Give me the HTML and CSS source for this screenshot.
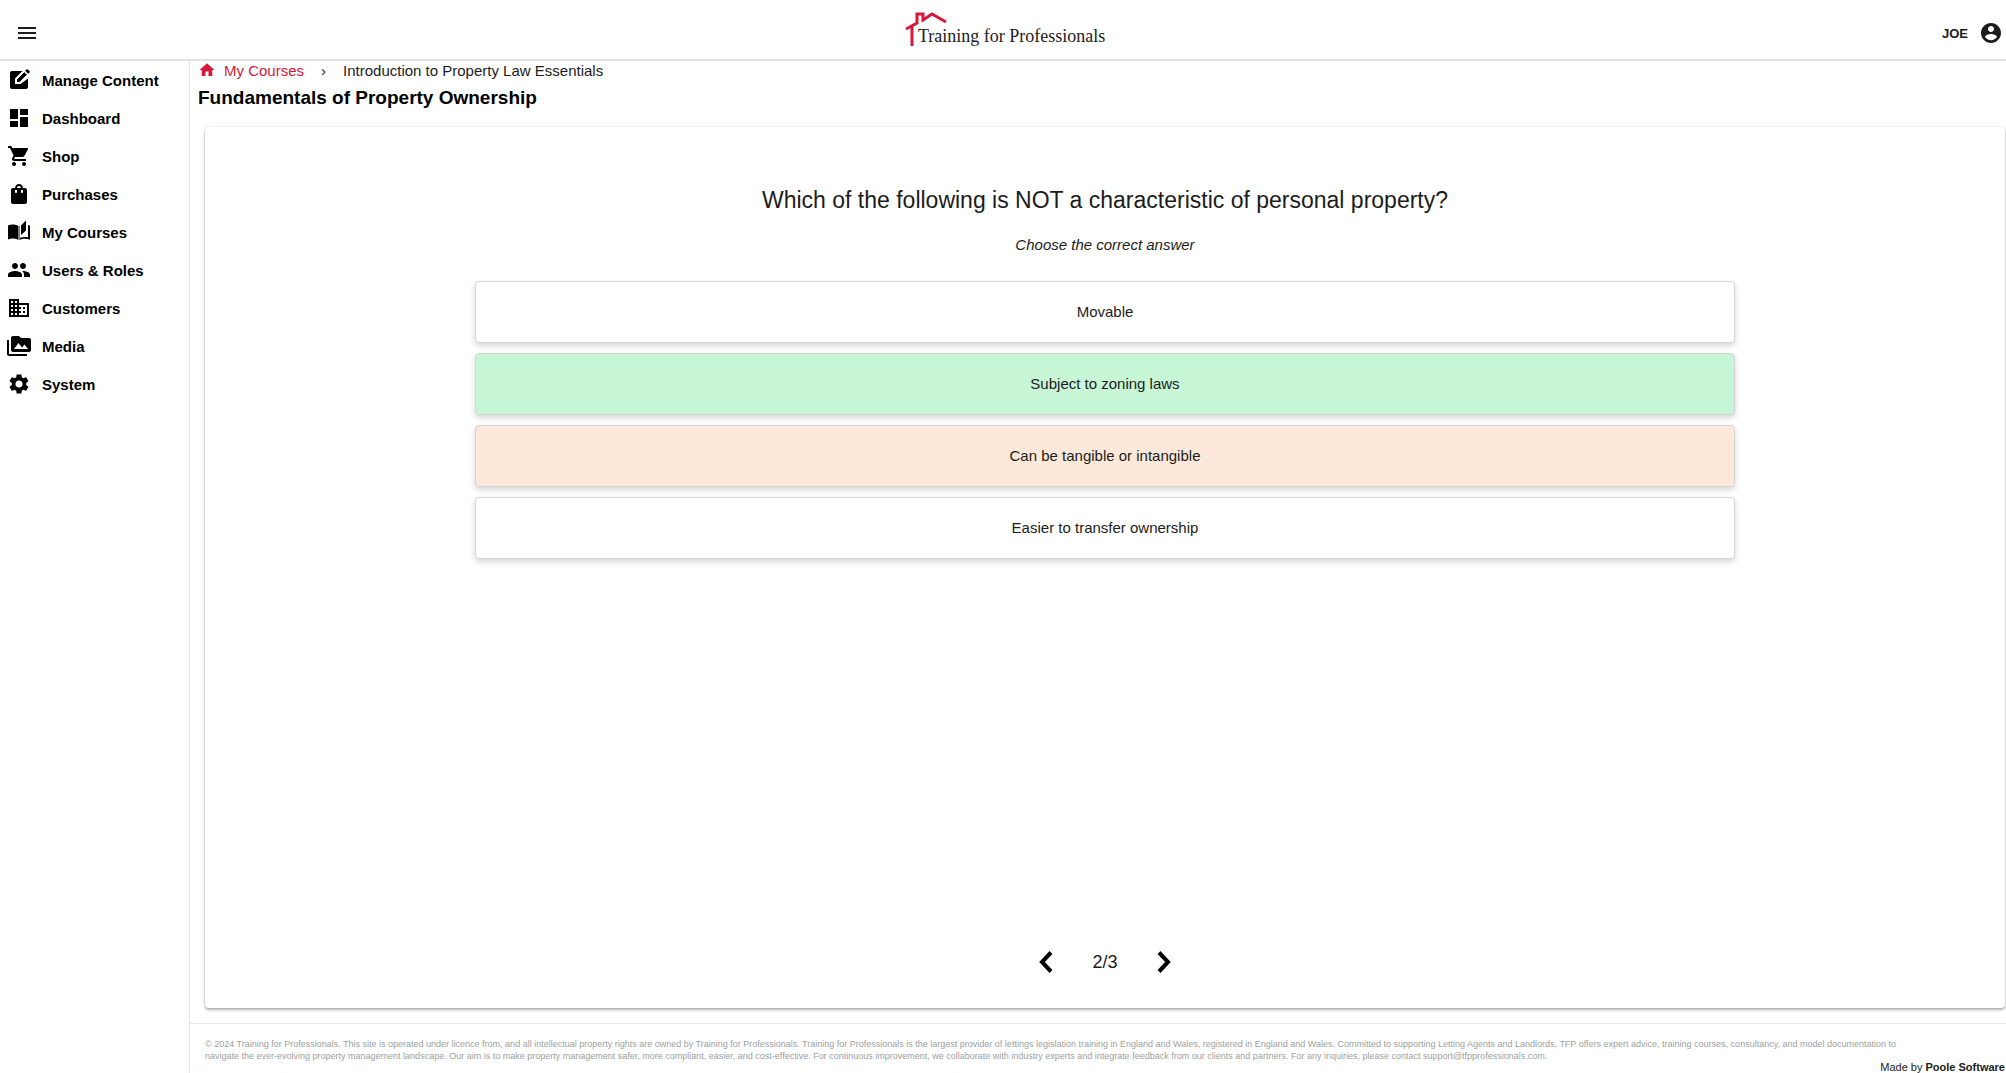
FILE: index.html
```html
<!DOCTYPE html>
<html lang="en">
<head>
  <meta charset="UTF-8" />
  <meta name="viewport" content="width=device-width, initial-scale=1" />
  <title>Fundamentals of Property Ownership</title>
  <link rel="stylesheet" href="styles.css">
</head>
<body>

  <header class="topbar">
    <button class="icon-btn" type="button" aria-label="Toggle menu">
      <svg class="icon" viewBox="0 0 24 24"><path d="M3 18h18v-2H3v2zm0-5h18v-2H3v2zm0-7v2h18V6H3z"/></svg>
    </button>
    <a class="logo" href="#" aria-label="Training for Professionals">
      <svg width="208" height="36" viewBox="0 0 208 36">
        <path class="logo-house" d="M1 19 L12 13 V4 H18 V10 L27 4 L41 12 M7 17 V36"/>
        <text class="logo-text" x="13" y="32">Training for Professionals</text>
      </svg>
    </a>
    <button class="user-btn" type="button">
      JOE
      <svg class="icon" viewBox="0 0 24 24"><path d="M12 2C6.480 2 2 6.480 2 12s4.480 10 10 10 10-4.480 10-10S17.520 2 12 2zm0 3c1.660 0 3 1.340 3 3s-1.340 3-3 3-3-1.340-3-3 1.340-3 3-3zm0 14.200c-2.500 0-4.710-1.280-6-3.220.030-1.990 4-3.080 6-3.080 1.990 0 5.970 1.090 6 3.080-1.290 1.940-3.500 3.220-6 3.220z"/></svg>
    </button>
  </header>

  <div class="layout">
    <nav class="sidebar">
      <a href="#">
        <svg class="icon" viewBox="0 0 24 24"><path d="M21 10.500V19a2 2 0 0 1-2 2H5a2 2 0 0 1-2-2V5c0-1.100.900-2 2-2h10.500L8 10.500V16h5.500z"/><path d="M9.500 14.500v-3L17.300 3.700l3 3-7.800 7.800zM18.200 2.800l1.300-1.300a1 1 0 0 1 1.400 0l1.600 1.600a1 1 0 0 1 0 1.400l-1.300 1.300z"/><path class="cut" d="M9.500 14.500v-3L17.300 3.700l3 3-7.800 7.800z"/></svg>
        Manage Content
      </a>
      <a href="#">
        <svg class="icon" viewBox="0 0 24 24"><path d="M3 13h8V3H3v10zm0 8h8v-6H3v6zm10 0h8V11h-8v10zm0-18v6h8V3h-8z"/></svg>
        Dashboard
      </a>
      <a href="#">
        <svg class="icon" viewBox="0 0 24 24"><path d="M7 18c-1.100 0-1.990.900-1.990 2S5.900 22 7 22s2-.900 2-2-.900-2-2-2zM1 2v2h2l3.600 7.590-1.350 2.450c-.160.280-.250.610-.250.960 0 1.100.900 2 2 2h12v-2H7.420c-.140 0-.250-.110-.250-.250l.030-.120.900-1.630h7.450c.750 0 1.410-.410 1.750-1.030l3.580-6.490c.080-.140.120-.310.120-.480 0-.550-.450-1-1-1H5.210l-.940-2H1zm16 16c-1.100 0-1.990.900-1.990 2s.890 2 1.990 2 2-.900 2-2-.900-2-2-2z"/></svg>
        Shop
      </a>
      <a href="#">
        <svg class="icon" viewBox="0 0 24 24"><path d="M18 6h-2c0-2.210-1.790-4-4-4S8 3.790 8 6H6c-1.100 0-2 .900-2 2v12c0 1.100.900 2 2 2h12c1.100 0 2-.900 2-2V8c0-1.100-.900-2-2-2zm-8 4c0 .550-.450 1-1 1s-1-.450-1-1V8h2v2zm2-6c1.100 0 2 .900 2 2h-4c0-1.100.900-2 2-2zm4 6c0 .550-.450 1-1 1s-1-.450-1-1V8h2v2z"/></svg>
        Purchases
      </a>
      <a href="#">
        <svg class="icon" viewBox="0 0 24 24"><path d="M1 5.500C4 4 8.500 4 11.500 6v14C8.500 18 4 18 1 19.500zM19 .500l-5 5V15l5-4.500zM21 5c.700.200 1.400.500 2 .800v13.900c-3-1.400-7.500-1.500-10.500.300V6l.500-.300v12.100c2.500-1 5.500-1.100 8-.600z"/></svg>
        My Courses
      </a>
      <a href="#">
        <svg class="icon" viewBox="0 0 24 24"><path d="M16 11c1.660 0 2.990-1.340 2.990-3S17.660 5 16 5s-3 1.340-3 3 1.340 3 3 3zm-8 0c1.660 0 2.990-1.340 2.990-3S9.660 5 8 5 5 6.340 5 8s1.340 3 3 3zm0 2c-2.330 0-7 1.170-7 3.500V19h14v-2.500c0-2.330-4.670-3.500-7-3.500zm8 0c-.290 0-.620.020-.970.050 1.160.840 1.970 1.970 1.970 3.450V19h6v-2.500c0-2.330-4.670-3.500-7-3.500z"/></svg>
        Users &amp; Roles
      </a>
      <a href="#">
        <svg class="icon" viewBox="0 0 24 24"><path d="M12 7V3H2v18h20V7H12zM6 19H4v-2h2v2zm0-4H4v-2h2v2zm0-4H4V9h2v2zm0-4H4V5h2v2zm4 12H8v-2h2v2zm0-4H8v-2h2v2zm0-4H8V9h2v2zm0-4H8V5h2v2zm10 12h-8v-2h2v-2h-2v-2h2v-2h-2V9h8v10zm-2-8h-2v2h2v-2zm0 4h-2v2h2v-2z"/></svg>
        Customers
      </a>
      <a href="#">
        <svg class="icon" viewBox="0 0 24 24"><path d="M2 6H0v14c0 1.100.900 2 2 2h18v-2H2V6zm20-2h-8l-2-2H6c-1.100 0-1.990.900-1.990 2L4 16c0 1.100.900 2 2 2h16c1.100 0 2-.900 2-2V6c0-1.100-.900-2-2-2zM7 15l4.500-6 3.500 4.510 2.500-3.010L21 15H7z"/></svg>
        Media
      </a>
      <a href="#">
        <svg class="icon" viewBox="0 0 24 24"><path d="M19.140 12.940c.040-.300.060-.610.060-.940 0-.320-.020-.640-.070-.940l2.030-1.580c.180-.140.230-.410.120-.610l-1.920-3.320c-.120-.220-.370-.290-.590-.220l-2.390.960c-.500-.380-1.030-.700-1.620-.940L14.400 2.810c-.040-.240-.240-.410-.480-.410h-3.840c-.240 0-.430.170-.470.410L9.250 5.350c-.590.240-1.130.570-1.620.940l-2.390-.960c-.220-.080-.470 0-.590.220L2.740 8.870c-.120.210-.080.470.120.610l2.030 1.580c-.050.300-.090.630-.090.940s.020.640.070.940l-2.030 1.580c-.180.140-.230.410-.120.610l1.920 3.320c.120.220.370.290.590.220l2.390-.960c.500.380 1.030.700 1.620.940l.360 2.540c.050.240.240.410.480.410h3.840c.240 0 .440-.170.470-.410l.360-2.540c.590-.240 1.130-.560 1.620-.940l2.390.960c.220.080.470 0 .590-.220l1.920-3.320c.120-.220.070-.470-.120-.610l-2.010-1.580zM12 15.600c-1.980 0-3.600-1.620-3.600-3.600s1.620-3.600 3.600-3.600 3.600 1.620 3.600 3.600-1.620 3.600-3.600 3.600z"/></svg>
        System
      </a>
    </nav>

    <div class="page">
      <main class="content">
        <nav class="breadcrumb" aria-label="Breadcrumb">
          <a href="#">
            <svg class="icon-small" viewBox="0 0 24 24"><path d="M10 20v-6h4v6h5v-8h3L12 3 2 12h3v8z"/></svg>
            My Courses
          </a>
          <span class="separator">›</span>
          <span>Introduction to Property Law Essentials</span>
        </nav>
        <h1>Fundamentals of Property Ownership</h1>

        <section class="card">
          <h2>Which of the following is NOT a characteristic of personal property?</h2>
          <p class="hint">Choose the correct answer</p>

          <div class="answers">
            <button type="button" class="answer">Movable</button>
            <button type="button" class="answer correct">Subject to zoning laws</button>
            <button type="button" class="answer wrong">Can be tangible or intangible</button>
            <button type="button" class="answer">Easier to transfer ownership</button>
          </div>

          <div class="pager">
            <button class="icon-btn" type="button" aria-label="Previous question">
              <svg class="chevron" viewBox="0 0 24 24"><path d="M17 2.500 L8 12 L17 21.500"/></svg>
            </button>
            <span>2/3</span>
            <button class="icon-btn" type="button" aria-label="Next question">
              <svg class="chevron" viewBox="0 0 24 24"><path d="M7 2.500 L16 12 L7 21.500"/></svg>
            </button>
          </div>
        </section>
      </main>

      <footer>
        <p class="legal">
          © 2024 Training for Professionals. This site is operated under licence from, and all intellectual property rights are owned by Training for Professionals. Training for Professionals is the largest provider of lettings legislation training in England and Wales, registered in England and Wales. Committed to supporting Letting Agents and Landlords, TFP offers expert advice, training courses, consultancy, and model documentation to<br>
          navigate the ever-evolving property management landscape. Our aim is to make property management safer, more compliant, easier, and cost-effective. For continuous improvement, we collaborate with industry experts and integrate feedback from our clients and partners. For any inquiries, please contact support@tfpprofessionals.com.
        </p>
        <p class="made-by">Made by <strong>Poole Software</strong></p>
      </footer>
    </div>
  </div>

</body>
</html>
```

FILE: styles.css
```css
* {
  margin: 0;
  padding: 0;
  box-sizing: border-box;
}

body {
  font-family: "Liberation Sans", Arial, sans-serif;
  font-size: 15px;
  color: #1c1c1c;
  background: #fff;
  min-height: 100vh;
  display: flex;
  flex-direction: column;
}

a {
  color: inherit;
  text-decoration: none;
}

button {
  font: inherit;
  color: inherit;
  background: none;
  border: none;
  cursor: pointer;
}

svg {
  display: block;
}

.icon {
  width: 24px;
  height: 24px;
  fill: currentColor;
  flex-shrink: 0;
}

.icon-small {
  width: 18px;
  height: 18px;
  fill: currentColor;
}

.icon .cut {
  fill: none;
  stroke: #fff;
  stroke-width: 1;
}

/* top bar */
.topbar {
  display: grid;
  grid-template-columns: 1fr auto 1fr;
  align-items: center;
  height: 61px;
  padding: 7px 3px 0 15px;
  border-bottom: 2px solid #e2e2e2;
}

.icon-btn {
  justify-self: start;
}

.logo-house {
  fill: none;
  stroke: #d5193a;
  stroke-width: 3;
}

.logo-text {
  font-family: "Liberation Serif", "Times New Roman", serif;
  font-size: 18px;
  fill: #1c1c1c;
}

.logo {
  margin-top: -10px;
}

.user-btn {
  justify-self: end;
  display: flex;
  align-items: center;
  gap: 11px;
  font-size: 13px;
  font-weight: bold;
}

/* sidebar */
.layout {
  flex: 1;
  display: flex;
}

.sidebar {
  width: 190px;
  flex-shrink: 0;
  border-right: 1px solid #e4e4e4;
  color: #000;
}

.sidebar a {
  display: flex;
  align-items: center;
  gap: 11px;
  height: 38px;
  padding-left: 7px;
  font-weight: bold;
}

/* content */
.page {
  flex: 1;
  min-width: 0;
  display: flex;
  flex-direction: column;
}

.content {
  flex: 1;
  display: flex;
  flex-direction: column;
  padding: 0 1px 15px 8px;
}

.breadcrumb {
  display: flex;
  align-items: center;
  height: 18px;
}

.breadcrumb a {
  display: flex;
  align-items: center;
  gap: 8px;
  color: #d5193a;
}

.separator {
  width: 39px;
  text-align: center;
}

h1 {
  margin-top: 7px;
  font-size: 19px;
  line-height: 24px;
  color: #000;
}

.card {
  flex: 1;
  display: flex;
  flex-direction: column;
  align-items: center;
  margin: 17px 0 0 7px;
  padding: 58px 0 30px;
  border-radius: 4px;
  box-shadow: 0 2px 3px rgba(0, 0, 0, 0.3), 0 0 2px rgba(0, 0, 0, 0.15);
}

h2 {
  font-size: 23px;
  font-weight: normal;
  line-height: 30px;
}

.hint {
  margin: 20px 0 26px;
  font-style: italic;
  line-height: 20px;
}

.answers {
  width: 70%;
  display: flex;
  flex-direction: column;
  gap: 10px;
}

.answer {
  height: 62px;
  padding-bottom: 2px;
  background: #fff;
  border: 1px solid #d4d4d4;
  border-radius: 4px;
  box-shadow: 0 3px 6px rgba(0, 0, 0, 0.16);
}

.answer.correct {
  background: #c6f6d5;
}

.answer.wrong {
  background: #fde8da;
}

.pager {
  display: flex;
  align-items: center;
  gap: 34px;
  margin-top: auto;
  font-size: 18px;
}

.chevron {
  width: 24px;
  height: 32px;
  fill: none;
  stroke: #000;
  stroke-width: 4;
}

/* footer */
footer {
  padding: 14px 0 1px 15px;
  border-top: 1px solid #e6e6e6;
}

.legal {
  font-size: 9px;
  line-height: 12px;
  color: #9b9f9f;
}

.made-by {
  padding-right: 1px;
  font-size: 11px;
  line-height: 10px;
  text-align: right;
}
```
